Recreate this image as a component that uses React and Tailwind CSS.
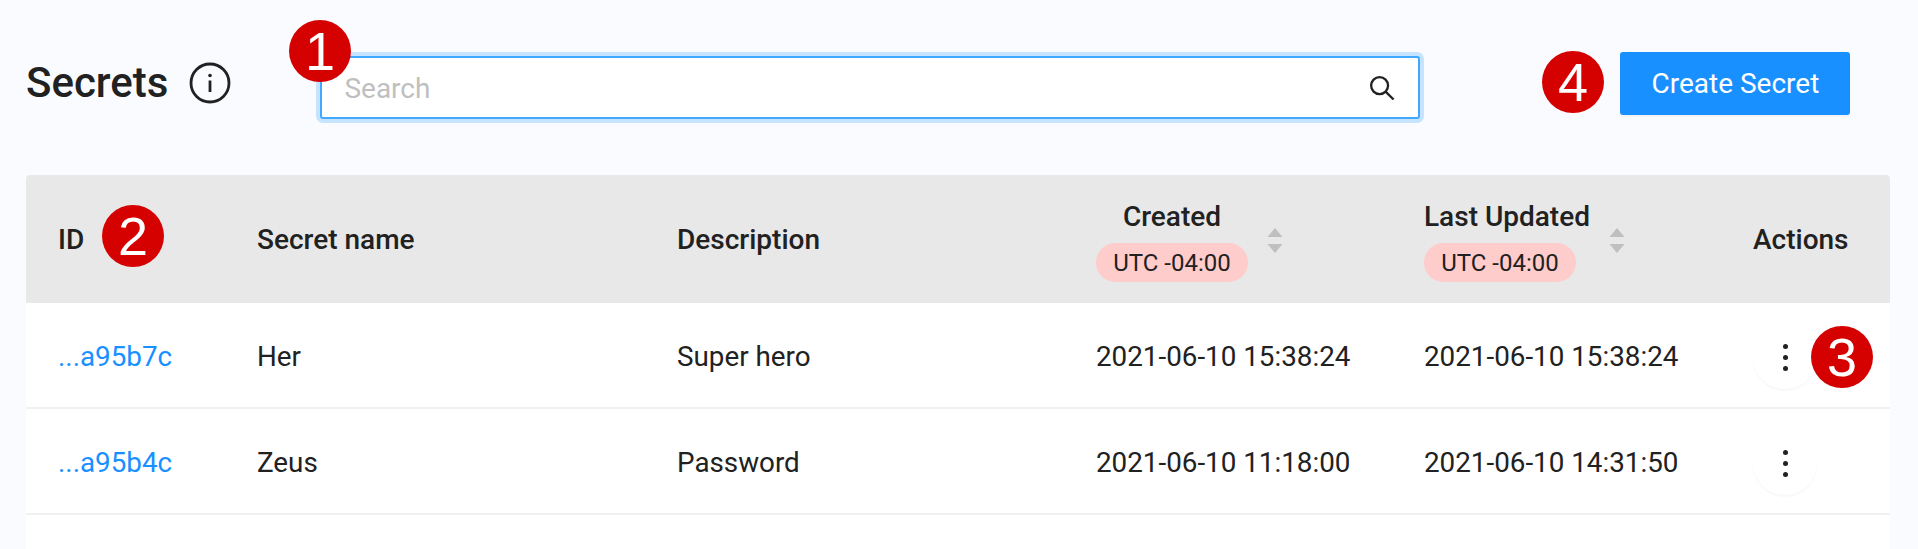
import React from 'react';

const COLUMNS = 'grid grid-cols-[199px_420px_419px_328px_329px_1fr] pl-8 items-center';

const rows = [
    { id: '...a95b7c', name: 'Her', description: 'Super hero', created: '2021-06-10 15:38:24', updated: '2021-06-10 15:38:24' },
    { id: '...a95b4c', name: 'Zeus', description: 'Password', created: '2021-06-10 11:18:00', updated: '2021-06-10 14:31:50' },
];

const Marker = ({ n, className }) => (
    <span className={`absolute w-[62px] h-[62px] rounded-full bg-[#d50000] text-white flex items-center justify-center text-[54px] leading-none font-['Liberation_Sans',sans-serif] ${className}`}>
        {n}
    </span>
);

const SortArrows = () => (
    <svg width="16" height="26" viewBox="0 0 16 26" className="shrink-0">
        <path d="M8 0 L15.5 9 H0.5 Z" fill="#bfbfbf" />
        <path d="M0.5 16 H15.5 L8 25 Z" fill="#bfbfbf" />
    </svg>
);

const DateHeader = ({ title, center }) => (
    <div className="flex items-center">
        <div className={`flex flex-col pt-[2px] ${center ? 'items-center' : 'items-start'}`}>
            <span className="text-[28px] leading-[38px] font-medium">{title}</span>
            <span className="mt-[7px] h-[39px] w-[152px] rounded-full bg-[#ffcccc] flex items-center justify-center text-[24px] font-normal text-[#212121]">
                UTC -04:00
            </span>
        </div>
        <div className="ml-[19px] mt-[3px]">
            <SortArrows />
        </div>
    </div>
);

const App = () => {
    return (
        <div className="h-[549px] overflow-hidden bg-[#f9fbff] pl-[26px] pr-[28px] pt-[52px] text-[#212121] font-['Roboto',sans-serif]">
            <div className="relative flex items-start h-[123px]">
                <h1 className="mt-[7px] text-[42px] leading-[48px] font-medium">Secrets</h1>
                <svg width="42" height="42" viewBox="0 0 42 42" className="ml-[21px] mt-[10px]" fill="none" stroke="#212121">
                    <circle cx="21" cy="21" r="19" strokeWidth="2.8" />
                    <circle cx="21" cy="13.5" r="1.8" fill="#212121" stroke="none" />
                    <path d="M21 18.5 V30" strokeWidth="2.8" />
                </svg>
                <div className="relative ml-[89px] mt-[4px] w-[1100px] h-[63px] rounded-[3px] bg-white border-2 border-[#40a9ff] ring-4 ring-[#c6e4ff] flex items-center">
                    <input
                        placeholder="Search"
                        className="flex-1 pl-[22px] pt-[2px] bg-transparent outline-none text-[28px] placeholder:text-[#bfbfbf]"
                    />
                    <svg width="26" height="26" viewBox="0 0 27 27" className="mr-[23px]" fill="none" stroke="#212121" strokeWidth="2.4">
                        <circle cx="11" cy="11" r="8.8" />
                        <path d="M17.5 17.5 L25.5 25.5" />
                    </svg>
                </div>
                <button className="ml-[200px] w-[230px] h-[63px] rounded-[3px] bg-[#1890ff] text-white text-[28px] shadow-[0_2px_0_rgba(0,0,0,0.03)]">
                    Create Secret
                </button>
                <Marker n="1" className="left-[263px] top-[-32px]" />
                <Marker n="4" className="left-[1516px] top-[-1px]" />
            </div>

            <div className="relative bg-white h-[374px]">
                <div className={`${COLUMNS} relative h-[128px] bg-[#e8e8e8] rounded-t-[4px] text-[28px] font-medium`}>
                    <span className="pt-[2px]">ID</span>
                    <span className="pt-[2px]">Secret name</span>
                    <span className="pt-[2px]">Description</span>
                    <DateHeader title="Created" center />
                    <DateHeader title="Last Updated" />
                    <span className="pt-[2px]">Actions</span>
                </div>
                {rows.map((row) => (
                    <div key={row.id} className={`${COLUMNS} h-[106px] pt-[4px] border-b-2 border-[#f0f0f0] text-[27.8px]`}>
                        <a className="text-[#1890ff]">{row.id}</a>
                        <span>{row.name}</span>
                        <span>{row.description}</span>
                        <span>{row.created}</span>
                        <span>{row.updated}</span>
                        <div className="w-[64px] h-[64px] rounded-full bg-white shadow-[0_2px_2px_rgba(0,0,0,0.03)] flex flex-col items-center justify-center gap-[6px]">
                            <i className="block w-[5px] h-[5px] rounded-full bg-[#212121]" />
                            <i className="block w-[5px] h-[5px] rounded-full bg-[#212121]" />
                            <i className="block w-[5px] h-[5px] rounded-full bg-[#212121]" />
                        </div>
                    </div>
                ))}
                <Marker n="2" className="left-[76px] top-[30px]" />
                <Marker n="3" className="left-[1785px] top-[151px]" />
            </div>
        </div>
    );
};

export default App;
